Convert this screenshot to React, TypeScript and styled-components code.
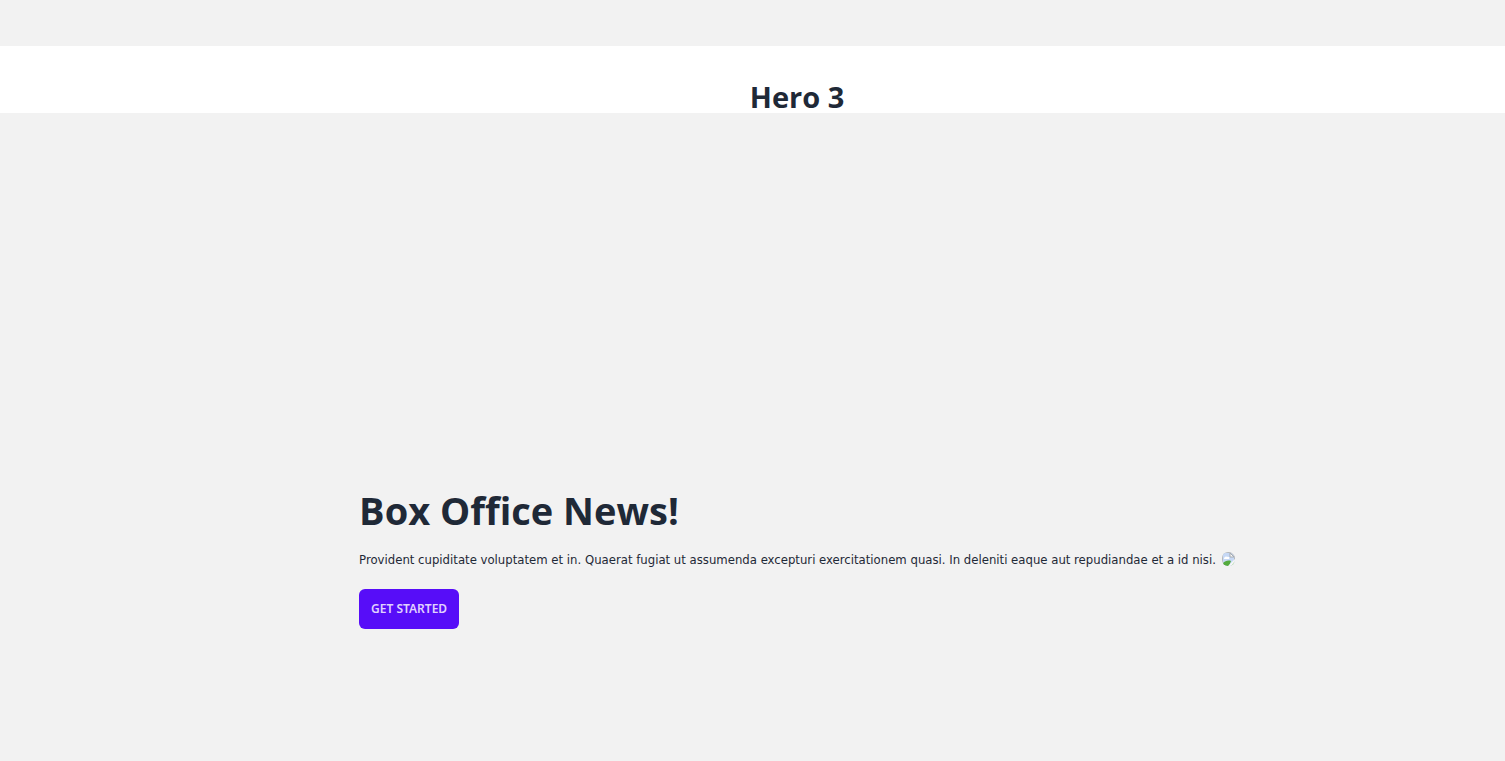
import React from "react";
import styled, { createGlobalStyle } from "styled-components";

const GlobalStyle = createGlobalStyle`
  *, *::before, *::after { box-sizing: border-box; }
  body {
    margin: 0;
    background: #f2f2f2;
    color: #1f2937;
    font-family: "Open Sans", "Noto Sans", sans-serif;
    font-size: 13px;
    line-height: 20px;
    font-variant-ligatures: none;
  }
  h1, h2, p { margin: 0; }
`;

const Page = styled.div`
  display: flex;
  flex-direction: column;
  min-height: 100vh;
  padding-top: 46px;
`;

const TitleBar = styled.header`
  padding: 34px 0 0 89px;
  background: #ffffff;
  text-align: center;
`;

const Title = styled.h2`
  font-size: 29px;
  line-height: 33px;
  font-weight: 700;
`;

const Hero = styled.main`
  flex: 1;
  display: flex;
  align-items: flex-start;
  justify-content: center;
  padding: 377px 0 48px 89px;
`;

const HeroContent = styled.div`
  display: flex;
  align-items: center;
  gap: 6px;
`;

const Headline = styled.h1`
  font-size: 38px;
  line-height: 40px;
  font-weight: 700;
`;

const Blurb = styled.p`
  padding: 20px 0 19px;
  font-family: "DejaVu Sans Condensed", "Open Sans", sans-serif;
`;

const ActionButton = styled.button`
  display: block;
  height: 40px;
  padding: 0 12px;
  border: 0;
  border-radius: 6px;
  background: #570df8;
  color: #e0d2fe;
  font: inherit;
  font-family: "Noto Sans", "Open Sans", sans-serif;
  font-size: 12px;
  font-weight: 600;
  font-variant-ligatures: normal;
  text-transform: uppercase;
  cursor: pointer;
`;

const Poster = styled.svg`
  display: block;
  flex: none;
  width: 13px;
  height: 16px;
`;

const MissingPoster = () => (
  <Poster viewBox="0 0 13 16" role="img" aria-label="Poster">
    <defs>
      <clipPath id="poster-shape">
        <rect width="13" height="14" rx="6" />
      </clipPath>
    </defs>
    <g clipPath="url(#poster-shape)">
      <path d="M0 0H9L13 4V14H0Z" fill="#b4b8bd" />
      <path d="M1 1H9L12 4V14H1Z" fill="#c6d8f5" />
      <path d="M2 7C2 5 4 4 5 5C7 4 8 6 7 7Z" fill="#ffffff" />
      <path d="M1 14V11C3 9 6 8 9 9L7 14Z" fill="#55ab3d" />
      <path d="M8 1V5H12Z" fill="#fafafa" stroke="#a6abb0" strokeWidth="1" />
      <path d="M6 14L13 7V14Z" fill="#f7f8f8" />
      <path d="M9 14L12 10V13Z" fill="#c3dfba" />
    </g>
  </Poster>
);

export default function App() {
  return (
    <>
      <GlobalStyle />
      <Page>
        <TitleBar>
          <Title>Hero 3</Title>
        </TitleBar>
        <Hero>
          <HeroContent>
            <div>
              <Headline>Box Office News!</Headline>
              <Blurb>
                Provident cupiditate voluptatem et in. Quaerat fugiat ut assumenda excepturi
                exercitationem quasi. In deleniti eaque aut repudiandae et a id nisi.
              </Blurb>
              <ActionButton type="button">Get Started</ActionButton>
            </div>
            <MissingPoster />
          </HeroContent>
        </Hero>
      </Page>
    </>
  );
}
